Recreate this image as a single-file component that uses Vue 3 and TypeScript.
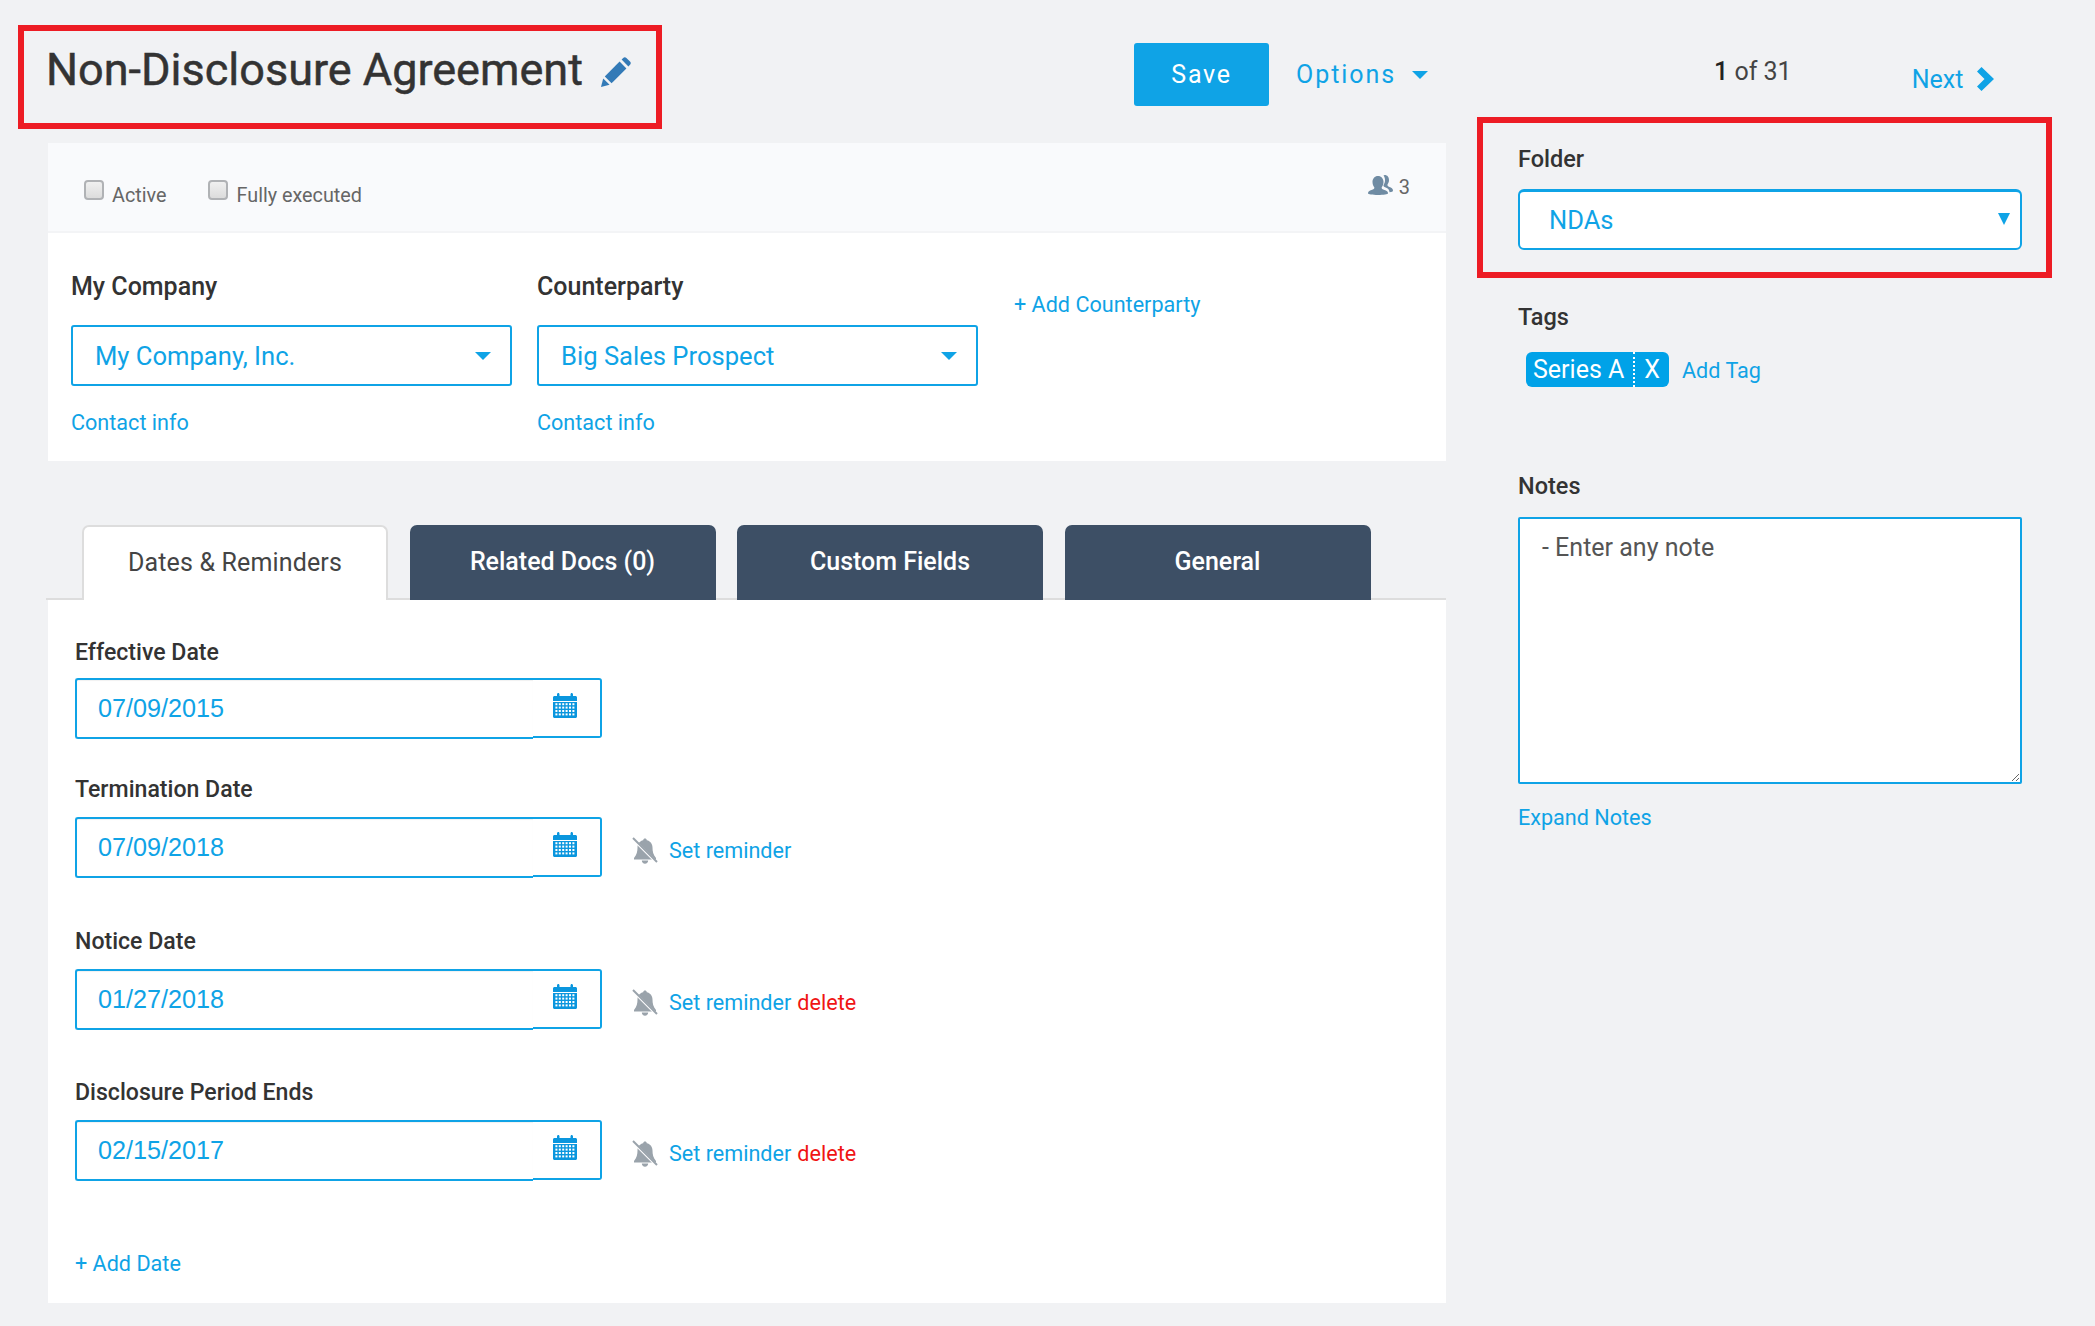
<script setup lang="ts">
interface DateRow {
  label: string
  value: string
  reminder: boolean
  remove: boolean
}

const dates: DateRow[] = [
  { label: 'Effective Date', value: '07/09/2015', reminder: false, remove: false },
  { label: 'Termination Date', value: '07/09/2018', reminder: true, remove: false },
  { label: 'Notice Date', value: '01/27/2018', reminder: true, remove: true },
  { label: 'Disclosure Period Ends', value: '02/15/2017', reminder: true, remove: true },
]

const parties = [
  { label: 'My Company', value: 'My Company, Inc.' },
  { label: 'Counterparty', value: 'Big Sales Prospect' },
]

const tabs = ['Related Docs (0)', 'Custom Fields', 'General']

const calendarCells: { x: number; y: number }[] = []
for (let r = 0; r < 4; r++) {
  for (let c = 0; c < 6; c++) {
    calendarCells.push({ x: 2.4 + c * 3.4, y: 10.2 + r * 3.4 })
  }
}
</script>

<template>
  <div class="page">
    <main class="main">
      <header class="topbar">
        <div class="title-box">
          <h1 class="title">Non-Disclosure Agreement</h1>
          <svg class="pencil" viewBox="0 0 30 30" aria-hidden="true">
            <path d="M0 30l2.2-8.6 6.4 6.4z" />
            <path d="M3.8 19.4L18.6 4.6l6.8 6.8-14.8 14.8z" />
            <path d="M20.6 2.6l1.6-1.6c1-1 2.2-1 3.2 0l3.600 3.600c1 1 1 2.200 0 3.200l-1.600 1.600z" />
          </svg>
        </div>
        <button class="save" type="button">Save</button>
        <div class="options">Options<span class="caret"></span></div>
      </header>

      <section class="card party-card">
        <div class="status">
          <label class="check"><span class="box"></span><span>Active</span></label>
          <label class="check second"><span class="box"></span><span>Fully executed</span></label>
          <div class="people">
            <svg class="people-icon" viewBox="0 0 25 20" aria-hidden="true">
              <path d="M16.500 0c3 0 4.500 2.300 4.500 5 0 2-.7 3.400-1.500 4.500-.3 1.200.5 1.800 2 2.500 1.800.8 3.500 1.500 3.500 3.500 0 1-1.200 1.500-3.500 1.800 0-2.500-1.500-3.800-3.800-4.800-1.700-.8-2.500-1.200-2.200-2.500 1-1.500 1.500-3 1.500-5 0-1.500-.4-3.200-1.500-4.500.5-.3 1-.5 1-.5z" />
              <path d="M10 1c3.300 0 5.500 2.700 5.500 6 0 2.300-.8 4-1.800 5.300-.3 1.500.8 2 2.800 2.800 2 .8 3.500 1.500 3.500 3.200 0 1.200-4.500 1.700-10 1.700S0 19.500 0 18.300c0-1.700 1.500-2.400 3.500-3.200 2-.8 3.100-1.300 2.800-2.800C5.300 11 4.500 9.300 4.500 7c0-3.300 2.200-6 5.500-6z" />
            </svg>
            <span>3</span>
          </div>
        </div>
        <div class="parties">
          <div v-for="party in parties" :key="party.label" class="party">
            <div class="field-label">{{ party.label }}</div>
            <div class="select">
              <span>{{ party.value }}</span>
              <span class="caret select-caret"></span>
            </div>
            <a class="link contact">Contact info</a>
          </div>
          <a class="link add-party">+ Add Counterparty</a>
        </div>
      </section>

      <nav class="tabs">
        <div class="tab active">Dates &amp; Reminders</div>
        <div v-for="tab in tabs" :key="tab" class="tab dark">{{ tab }}</div>
      </nav>

      <section class="card dates-card">
        <div v-for="row in dates" :key="row.label" class="date-row">
          <div class="field-label date-label">{{ row.label }}</div>
          <div class="date-line">
            <div class="date-input">
              <div class="date-value">{{ row.value }}</div>
              <div class="date-addon">
                <svg class="calendar" viewBox="0 0 24 25" aria-hidden="true">
                  <path d="M0 4.500C0 3.700.7 3 1.500 3H4V1.500C4 .7 4.500 0 5.300 0S6.500.7 6.500 1.500V3h11V1.500c0-.8.5-1.500 1.200-1.500S20 .7 20 1.500V3h2.500c.8 0 1.500.7 1.500 1.500V8H0z" />
                  <path d="M0 9h24v14.500c0 .8-.7 1.500-1.500 1.500h-21C.7 25 0 24.300 0 23.500z" />
                  <rect
                    v-for="(cell, i) in calendarCells"
                    :key="i"
                    :x="cell.x"
                    :y="cell.y"
                    width="2"
                    height="2"
                    fill="#fff"
                  />
                </svg>
              </div>
            </div>
            <div v-if="row.reminder" class="reminder">
              <svg class="bell" viewBox="0 0 26 27" aria-hidden="true">
                <path d="M13 1.500c1 0 1.700.7 1.800 1.700 3.600.7 5.700 3.800 5.700 7.300 0 3.700.7 7.500 3.500 10.500v1.500H2v-1.500c2.800-3 3.500-6.800 3.500-10.500 0-3.500 2.100-6.600 5.700-7.300.1-1 .8-1.700 1.800-1.700z" />
                <path d="M9.800 23.500h6.400c0 1.800-1.400 3.300-3.200 3.300s-3.200-1.500-3.200-3.300z" />
                <path class="bell-gap" d="M1.500 2.500l23 23" />
                <path class="bell-slash" d="M1 1l24 24" />
              </svg>
              <a class="link">Set reminder</a>
              <a v-if="row.remove" class="delete">delete</a>
            </div>
          </div>
        </div>
        <a class="link add-date">+ Add Date</a>
      </section>
    </main>

    <aside class="side">
      <div class="pager">
        <div class="count"><strong>1</strong> of 31</div>
        <a class="next">
          Next
          <svg class="chevron" viewBox="0 0 17 24" aria-hidden="true">
            <path d="M4.500 0L17 12 4.500 24 0 19.500 7.500 12 0 4.500z" />
          </svg>
        </a>
      </div>

      <div class="folder-box">
        <div class="field-label side-label">Folder</div>
        <div class="folder-select">
          <span>NDAs</span>
          <span class="folder-arrow"></span>
        </div>
      </div>

      <div class="side-content">
        <div class="field-label side-label">Tags</div>
        <div class="tags">
          <span class="chip"><span class="chip-name">Series A</span><span class="chip-x">X</span></span>
          <a class="link add-tag">Add Tag</a>
        </div>
        <div class="field-label side-label notes-label">Notes</div>
        <textarea class="notes" placeholder="- Enter any note"></textarea>
        <a class="link expand">Expand Notes</a>
      </div>
    </aside>
  </div>
</template>

<style>
html,
body {
  margin: 0;
  background: #f1f2f4;
}
</style>

<style scoped>
.page {
  display: flex;
  width: 2095px;
  height: 1326px;
  overflow: hidden;
  background: #f1f2f4;
  font-family: Roboto, "Liberation Sans", sans-serif;
  color: #333;
}

.main {
  width: 1446px;
  flex: none;
}

.side {
  margin-left: 31px;
  width: 575px;
  flex: none;
}

.link {
  color: #0fa3e6;
  font-size: 21.600px;
  line-height: 30px;
}

.topbar {
  display: flex;
  align-items: flex-start;
  height: 143px;
}

.title-box {
  box-sizing: border-box;
  display: flex;
  align-items: flex-start;
  width: 644px;
  height: 104px;
  margin: 25px 0 0 18px;
  padding: 13px 0 0 22px;
  border: 6px solid #ed1c24;
}

.title {
  margin: 0;
  font-size: 45px;
  font-weight: 400;
  line-height: 52px;
  letter-spacing: 0;
  color: #333;
  white-space: nowrap;
  -webkit-text-stroke: 0.5px #333;
}

.pencil {
  width: 30px;
  height: 30px;
  margin: 13px 0 0 18px;
  fill: #337ab7;
}

.save {
  width: 135px;
  height: 63px;
  margin: 43px 0 0 472px;
  border: 0;
  border-radius: 3px;
  background: #0fa3e6;
  color: #fff;
  font: 400 25px Roboto, sans-serif;
  letter-spacing: 1.700px;
}

.options {
  display: flex;
  align-items: center;
  height: 63px;
  margin: 43px 0 0 27px;
  color: #0fa3e6;
  font-size: 25px;
  letter-spacing: 1.950px;
}

.caret {
  display: block;
  width: 0;
  height: 0;
  margin-left: 16px;
  border-top: 8px solid #0fa3e6;
  border-left: 8px solid transparent;
  border-right: 8px solid transparent;
}

.card {
  margin-left: 48px;
  background: #fff;
}

.party-card {
  height: 318px;
}

.status {
  box-sizing: border-box;
  display: flex;
  height: 90px;
  padding: 37px 36px 0 36px;
  background: #f9fafc;
  border-bottom: 2px solid #f3f4f6;
}

.check {
  display: flex;
  align-items: flex-start;
  font-size: 19.800px;
  line-height: 24px;
  color: #666;
}

.check span:last-child {
  margin: 4px 0 0 8px;
}

.second {
  margin-left: 41px;
}

.second span:last-child {
  margin-left: 9px;
}

.box {
  box-sizing: border-box;
  display: block;
  width: 20px;
  height: 20px;
  border: 2px solid #b0b2b5;
  border-radius: 4px;
  background: linear-gradient(#f0f0f0, #dcdcdc);
}

.people {
  display: flex;
  align-items: flex-start;
  gap: 6px;
  margin-left: auto;
  margin-top: -5px;
  font-size: 20px;
  line-height: 24px;
  color: #666;
}

.people-icon {
  width: 25px;
  height: 20px;
  fill: #6f8ba3;
}

.parties {
  display: flex;
  padding-left: 23px;
}

.party {
  width: 441px;
  margin-right: 25px;
}

.field-label {
  font-size: 23.100px;
  font-weight: 500;
  line-height: 30px;
  color: #333;
}

.party .field-label {
  margin-top: 39px;
  font-size: 25px;
}

.select {
  box-sizing: border-box;
  display: flex;
  align-items: center;
  justify-content: space-between;
  height: 61px;
  margin-top: 23px;
  padding: 0 19px 0 22px;
  border: 2px solid #0fa3e6;
  border-radius: 3px;
  color: #0fa3e6;
  font-size: 25.600px;
  background: #fff;
}

.contact {
  display: block;
  margin-top: 22px;
}

.add-party {
  margin: 57px 0 0 11px;
  white-space: nowrap;
}

.tabs {
  box-sizing: border-box;
  display: flex;
  height: 75px;
  margin-top: 64px;
  margin-left: 46px;
  padding-left: 36px;
  gap: 21.500px;
  border-bottom: 2px solid #ddd;
}

.tab {
  box-sizing: border-box;
  width: 306px;
  height: 75px;
  border-radius: 7px 7px 0 0;
  font-size: 25px;
  line-height: 74px;
  text-align: center;
}

.tab.active {
  width: 306px;
  border: 2px solid #ddd;
  border-bottom: 0;
  background: #fff;
  color: #444;
  line-height: 72px;
  letter-spacing: 0.150px;
}

.tab.dark {
  background: #3d4f65;
  color: #fff;
  font-weight: 500;
}

.dates-card {
  box-sizing: border-box;
  height: 703px;
  padding: 38px 0 0 27px;
}

.date-row {
  margin-bottom: 48px;
}

.date-row:first-child {
  margin-bottom: 36px;
}

.date-row:nth-child(2) {
  margin-bottom: 49px;
}

.date-label {
  margin-bottom: 10px;
}

.date-row:nth-child(n + 2) .date-label {
  margin-bottom: 12px;
}

.date-line {
  display: flex;
  align-items: center;
}

.date-input {
  display: flex;
  align-items: flex-start;
  width: 527px;
}

.date-value {
  box-sizing: border-box;
  flex: 1;
  height: 61px;
  padding-left: 21px;
  border: solid #0fa3e6;
  border-width: 2px 0 2px 2px;
  border-radius: 3px 0 0 3px;
  line-height: 57px;
  font-family: "Liberation Sans", Arial, sans-serif;
  font-size: 25.200px;
  color: #0fa3e6;
  background: #fff;
  box-shadow: inset 0 1px 1px rgba(0, 0, 0, 0.06);
}

.date-addon {
  box-sizing: border-box;
  display: flex;
  justify-content: center;
  width: 69px;
  height: 60px;
  padding: 13px 3px 0 0;
  border: solid #0fa3e6;
  border-width: 2px 2px 2px 0;
  border-radius: 0 3px 3px 0;
  background: #fff;
}

.calendar {
  width: 24px;
  height: 25px;
  fill: #0a96de;
}

.reminder {
  display: flex;
  align-items: center;
  margin: 6px 0 0 30px;
}

.bell {
  width: 26px;
  height: 27px;
  margin-right: 11px;
  fill: #9aa3ab;
}

.bell-gap {
  fill: none;
  stroke: #fff;
  stroke-width: 2.500px;
}

.bell-slash {
  fill: none;
  stroke: #9aa3ab;
  stroke-width: 2px;
}

.delete {
  margin-left: 6px;
  color: #f01414;
  font-size: 21.600px;
  line-height: 30px;
}

.add-date {
  display: block;
  margin-top: 68px;
}

.pager {
  display: flex;
  align-items: flex-start;
  height: 117px;
}

.count {
  margin: 57px 0 0 237px;
  font-size: 25px;
  line-height: 30px;
  color: #444;
}

.count strong {
  font-weight: 500;
  color: #222;
}

.next {
  display: flex;
  align-items: center;
  margin: 65px 0 0 120px;
  color: #0fa3e6;
  font-size: 25px;
  line-height: 30px;
}

.chevron {
  width: 17px;
  height: 24px;
  margin: -3px 0 0 14px;
  fill: #0fa3e6;
}

.folder-box {
  box-sizing: border-box;
  width: 575px;
  height: 161px;
  padding: 21px 0 0 35px;
  border: 6px solid #ed1c24;
}

.side-label {
  font-size: 23.500px;
}

.folder-select {
  box-sizing: border-box;
  position: relative;
  display: flex;
  align-items: center;
  width: 504px;
  height: 61px;
  margin-top: 15px;
  padding-left: 29px;
  border: 2px solid #0fa3e6;
  border-top-width: 3px;
  border-radius: 6px;
  background: #fff;
  color: #0fa3e6;
  font-size: 25.500px;
}

.folder-arrow {
  position: absolute;
  right: 10px;
  top: 21px;
  width: 0;
  height: 0;
  border-top: 12px solid #0fa3e6;
  border-left: 6px solid transparent;
  border-right: 6px solid transparent;
}

.side-content {
  padding: 24px 0 0 41px;
}

.tags {
  display: flex;
  align-items: center;
  margin: 20px 0 0 8px;
  height: 35px;
}

.chip {
  display: flex;
  height: 35px;
  border-radius: 6px;
  background: #00a2e8;
  color: #fff;
  font-size: 25px;
  line-height: 36px;
}

.chip-name {
  box-sizing: border-box;
  width: 109px;
  padding-left: 7px;
  border-right: 2px dotted #fff;
}

.chip-x {
  width: 34px;
  text-align: center;
}

.add-tag {
  margin: 2px 0 0 13px;
}

.notes-label {
  margin-top: 84px;
}

.notes {
  display: block;
  box-sizing: border-box;
  width: 504px;
  height: 267px;
  margin-top: 16px;
  padding: 14px 22px;
  border: 2px solid #0fa3e6;
  border-radius: 2px;
  outline: none;
  background: #fff;
  font: 400 25px Roboto, sans-serif;
}

.notes::placeholder {
  color: #555;
  opacity: 1;
}

.expand {
  display: block;
  margin-top: 19px;
}
</style>
